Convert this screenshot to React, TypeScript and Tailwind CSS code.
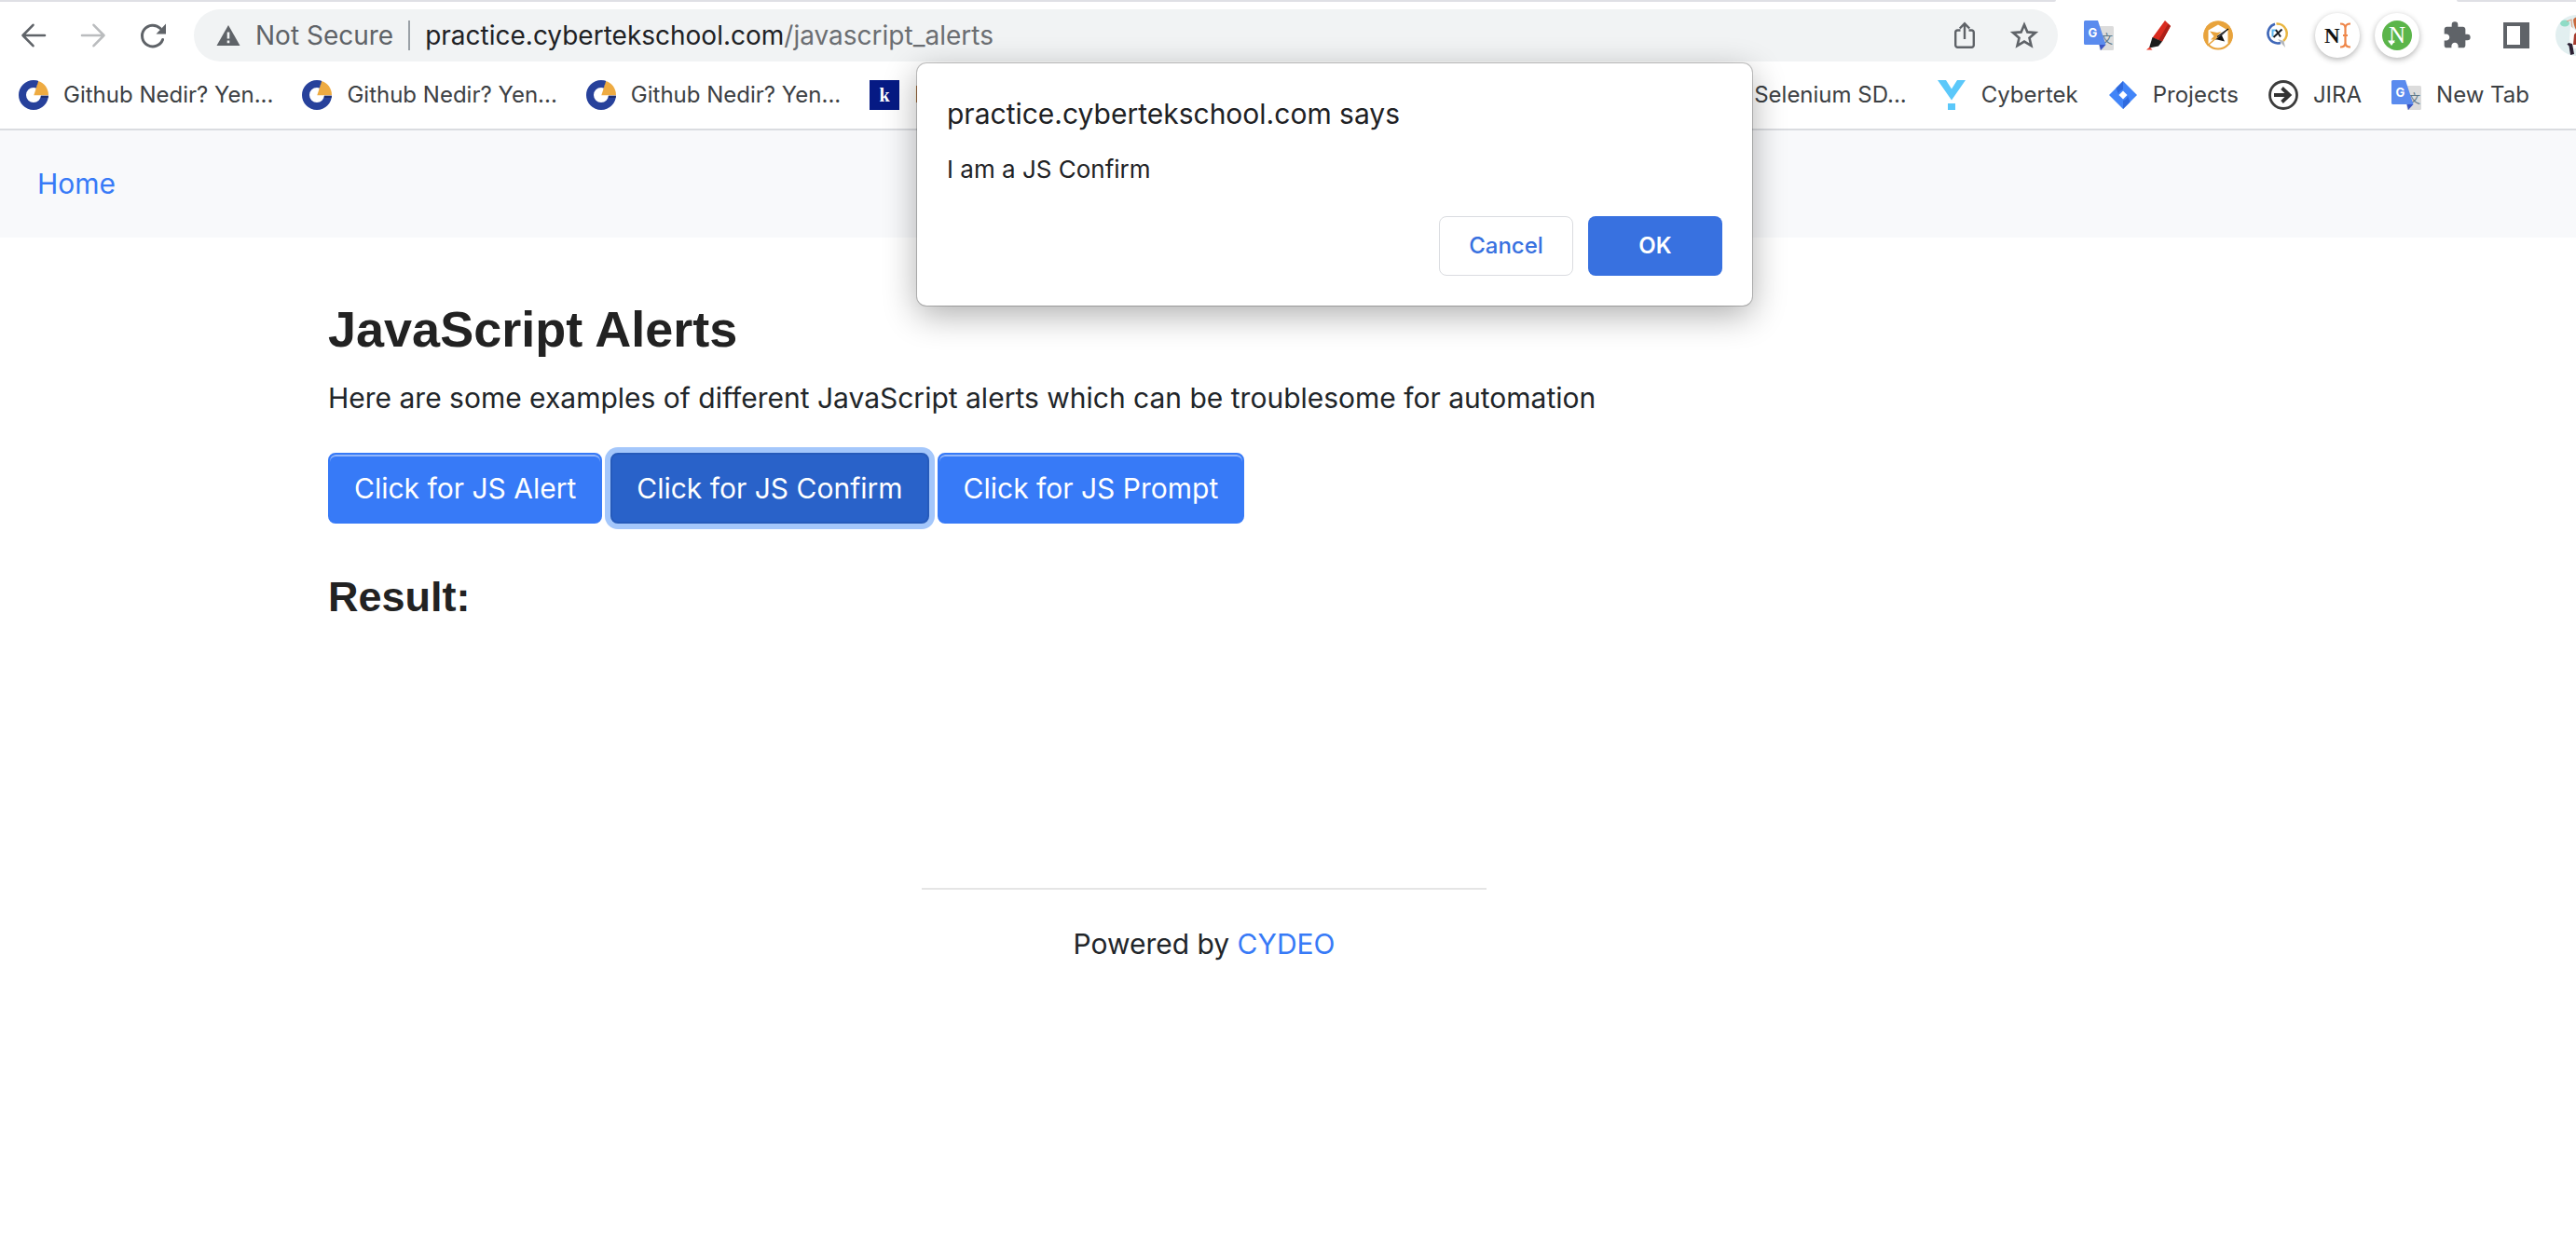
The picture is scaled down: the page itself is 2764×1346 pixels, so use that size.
import type { ReactNode } from "react";

const BookmarkRing = () => (
  <svg viewBox="0 0 32 32" className="size-8 shrink-0" aria-hidden="true">
    <circle cx="16" cy="16" r="12" fill="#fff" stroke="#27419b" strokeWidth="8" />
    <path d="M16.500 15.500 21.500 0 32 0V16.500H16.500Z" fill="#fff" />
    <path d="M21 0.800 18.500 9.500 21 8.500Z" fill="#1d2f73" />
    <path d="M16.300 16.300 21.300 1.100C27.500 3.200 32 8.800 32 16.300Z" fill="#eeab42" />
    <path d="M24 17H32L31.500 19H23.800Z" fill="#1d2f73" />
  </svg>
);

const KIcon = () => (
  <svg viewBox="0 0 32 32" className="size-8 shrink-0" aria-hidden="true">
    <rect width="32" height="32" fill="#061a84" />
    <text x="16" y="23" textAnchor="middle" fontFamily="Liberation Serif, serif" fontSize="20" fontWeight="700" fill="#fff">k</text>
  </svg>
);

const TranslateIcon = () => (
  <svg viewBox="0 0 32 32" className="size-8 shrink-0" aria-hidden="true">
    <path d="M12 6H30.500a1.500 1.500 0 0 1 1.500 1.500V30.500a1.500 1.500 0 0 1-1.500 1.500H17Z" fill="#dcdcdc" />
    <text x="24.500" y="24" textAnchor="middle" fontFamily="Noto Sans CJK SC, sans-serif" fontSize="13" fill="#607988">文</text>
    <path d="M16.500 26H23.500L18 32Z" fill="#3a55c4" />
    <path d="M1.500 0H15L23.500 26H1.500A1.500 1.500 0 0 1 0 24.500V1.500A1.500 1.500 0 0 1 1.500 0Z" fill="#5a8bee" />
    <text x="9.300" y="18" textAnchor="middle" fontFamily="Inter, sans-serif" fontSize="13" fontWeight="700" fill="#fff">G</text>
  </svg>
);

const CybertekIcon = () => (
  <svg viewBox="0 0 32 32" className="size-8 shrink-0" aria-hidden="true">
    <path d="M1 0H10L16 9.500 22 0H31L16 21.500Z" fill="#5bc8fa" />
    <rect x="12" y="25" width="8" height="7" fill="#5bc8fa" />
  </svg>
);

const JiraIcon = () => (
  <svg viewBox="0 0 32 32" className="size-8 shrink-0" aria-hidden="true">
    <path d="M16 1 31 16 16 31 1 16Z" fill="#4285f8" />
    <path d="M16 1V10Q11.500 11.500 11 15L8.500 8.500Z" fill="#2f6ade" />
    <path d="M16 31V22Q20.500 20.500 21 17L23.500 23.500Z" fill="#2f6ade" />
    <path d="M16 11.500 20.500 16 16 20.500 11.500 16Z" fill="#fff" />
  </svg>
);

const ArrowCircleIcon = () => (
  <svg viewBox="0 0 32 32" className="size-8 shrink-0" aria-hidden="true" fill="none">
    <circle cx="16" cy="16" r="14.500" stroke="#3c3c3c" strokeWidth="2.800" />
    <path d="M6 16H23M14.500 8.500 22.500 16 14.500 23.500" stroke="#333" strokeWidth="3.800" />
  </svg>
);

const BackIcon = () => (
  <svg viewBox="0 0 32 32" className="size-8" aria-hidden="true" fill="none" stroke="currentColor" strokeWidth="2.600" strokeLinecap="round" strokeLinejoin="round">
    <path d="M28 16H4.500M15.500 4.800 4.500 16 15.500 27.200" />
  </svg>
);

const ForwardIcon = () => (
  <svg viewBox="0 0 32 32" className="size-8" aria-hidden="true" fill="none" stroke="currentColor" strokeWidth="2.600" strokeLinecap="round" strokeLinejoin="round">
    <path d="M4 16H27.500M16.500 4.800 27.500 16 16.500 27.200" />
  </svg>
);

const ReloadIcon = () => (
  <svg viewBox="0 0 32 32" className="size-8" aria-hidden="true">
    <path d="M26.600 20.500A11.400 11.400 0 1 1 24 8.500" fill="none" stroke="#5f6368" strokeWidth="3" strokeLinecap="round" />
    <path d="M30 3.500V14.500H19.500Z" fill="#5f6368" />
  </svg>
);

const WarningIcon = () => (
  <svg viewBox="0 0 26 24" className="h-6 w-[26px]" aria-hidden="true">
    <path d="M13 1 25.500 23H0.500Z" fill="#5f6368" />
    <path d="M11.700 8.500H14.300V15.500H11.700ZM11.700 17.500H14.300V20.200H11.700Z" fill="#f1f3f4" />
  </svg>
);

const ShareIcon = () => (
  <svg viewBox="0 0 32 32" className="size-8" aria-hidden="true" fill="none" stroke="#5f6368" strokeWidth="2.400">
    <path d="M11.500 10.500H8.500a2.300 2.300 0 0 0-2.300 2.300V26.500a2.300 2.300 0 0 0 2.300 2.300H23.500a2.300 2.300 0 0 0 2.300-2.300V12.800a2.300 2.300 0 0 0-2.300-2.300H20.500" />
    <path d="M16 20V3.500M10.800 8.500 16 3.300 21.200 8.500" />
  </svg>
);

const StarIcon = () => (
  <svg viewBox="0 0 32 32" className="size-8" aria-hidden="true" fill="none" stroke="#5f6368" strokeWidth="2.600">
    <path d="M16 4.500 19.400 12.400 28 13.100 21.500 18.700 23.500 27.100 16 22.600 8.500 27.100 10.500 18.700 4 13.100 12.600 12.400Z" />
  </svg>
);

const MarkerIcon = () => (
  <svg viewBox="0 0 32 32" className="size-8" aria-hidden="true">
    <path d="M23 0 29 6 20 22.500 9.500 18.500Z" fill="#d92b1f" />
    <path d="M29 6 20 22.500 16 21 26.500 3.500Z" fill="#ad2018" />
    <path d="M9.500 18 20 22.500 16 27.500 6 29.500Z" fill="#1c1c1c" />
    <path d="M6.500 28.500 9.500 31.500H3Z" fill="#e8392b" />
  </svg>
);

const HexagonIcon = () => (
  <svg viewBox="0 0 32 32" className="size-8" aria-hidden="true">
    <circle cx="16" cy="16" r="14.600" fill="#fff" stroke="#e8a33c" strokeWidth="2" />
    <path d="M16 0.500A15.500 15.500 0 0 0 4 26L5.500 24V10.500L16 4.500 26.500 10.500V24L28 26A15.500 15.500 0 0 0 16 0.500Z" fill="#e8a33c" />
    <path d="M7 11.500 15 13 19.500 12 14.500 17 12 20.500 8 20.500 11.500 17Z" fill="#e8a33c" />
    <path d="M20 16 23 22.500 15 20.500 12.500 20.500 26 10.500Z" fill="#111" />
    <path d="M4.500 27 16 17" stroke="#e8a33c" strokeWidth="1.600" />
    <path d="M15 17.500 27 9" stroke="#111" strokeWidth="1.500" />
  </svg>
);

const MagnifierIcon = () => (
  <svg viewBox="0 0 32 32" className="size-8" aria-hidden="true" fill="none">
    <path d="M13 3.800A10.500 10.500 0 1 0 19 24" stroke="#4068b8" strokeWidth="2.600" />
    <path d="M14.500 3.500A10.500 10.500 0 0 1 22 22" stroke="#e9b53f" strokeWidth="2.600" />
    <path d="M10.500 9.500V17.500M10.500 10.500H14.500" stroke="#5ab4ee" strokeWidth="2" />
    <path d="M11.500 18 20.500 9.500M14 10 19 17.500" stroke="#191c22" strokeWidth="2" />
    <path d="M16 20 24 29 22.500 22Z" fill="#b3b7bc" />
  </svg>
);

const NCursorIcon = () => (
  <svg viewBox="0 0 32 32" className="size-8" aria-hidden="true">
    <text x="10.300" y="24" textAnchor="middle" fontFamily="Liberation Serif, serif" fontSize="23" fontWeight="700" fill="#111">N</text>
    <path d="M19 3.500Q24.500 3.500 24.500 8V24Q24.500 28.500 19 28.500M30 3.500Q24.500 3.500 24.500 8M24.500 24Q24.500 28.500 30 28.500M22 16H27" fill="none" stroke="#ee8649" strokeWidth="2.200" />
  </svg>
);

const NGreenIcon = () => (
  <svg viewBox="0 0 32 32" className="size-8" aria-hidden="true">
    <circle cx="16" cy="16" r="16" fill="#5bb54a" />
    <text x="16" y="24" textAnchor="middle" fontFamily="Liberation Serif, serif" fontSize="25" fill="#fff">N</text>
    <path d="M6 21.500H14L10 27Z" fill="#fff" />
  </svg>
);

const PuzzleIcon = () => (
  <svg viewBox="0 0 24 24" className="size-8" aria-hidden="true">
    <path d="M20.500 11H19V7c0-1.100-.9-2-2-2h-4V3.500a2.500 2.500 0 0 0-5 0V5H4c-1.100 0-1.990.9-1.990 2v3.800H3.500c1.490 0 2.700 1.210 2.700 2.700s-1.210 2.700-2.700 2.700H2V20c0 1.100.9 2 2 2h3.800v-1.500c0-1.490 1.210-2.700 2.700-2.700 1.490 0 2.700 1.210 2.700 2.700V22H17c1.100 0 2-.9 2-2v-4h1.500a2.500 2.500 0 0 0 0-5z" fill="#5f6368" />
  </svg>
);

const SidePanelIcon = () => (
  <svg viewBox="0 0 28 28" className="size-7" aria-hidden="true">
    <path d="M0 0H28V28H0ZM4 4V24H18V4Z" fill="#5f6368" fillRule="evenodd" />
  </svg>
);

const AvatarIcon = () => (
  <svg viewBox="0 0 44 44" className="size-11 shrink-0" aria-hidden="true">
    <clipPath id="avatar-disc">
      <circle cx="22" cy="22" r="22" />
    </clipPath>
    <g clipPath="url(#avatar-disc)">
      <rect width="44" height="44" fill="#e2eff0" />
      <ellipse cx="10" cy="9" rx="5" ry="3.500" fill="#8fdcc6" />
      <path d="M12 7 17 5 18 15" fill="none" stroke="#d9a58c" strokeWidth="1.200" />
      <path d="M16 12 22 17H44V36H17L15 26Z" fill="#fbfbfb" />
      <path d="M19 5Q22 1 28 2V18Q20 19 19 5Z" fill="#c9683b" />
      <path d="M20 21 22 19V32H19Z" fill="#a63a2c" />
      <path d="M14 30 18 31 20 42 16 43Z" fill="#2b2033" />
      <path d="M13 31 16 33" stroke="#2b2033" strokeWidth="2" />
    </g>
  </svg>
);

function ToolButton({ label, children, className = "" }: { label: string; children: ReactNode; className?: string }) {
  return (
    <button type="button" aria-label={label} className={`flex h-14 w-16 shrink-0 items-center justify-center ${className}`}>
      {children}
    </button>
  );
}

function RoundBadge({ children }: { children: ReactNode }) {
  return (
    <span className="flex size-12 items-center justify-center rounded-full bg-white shadow-[0_2px_6px_rgba(0,0,0,0.3)]">{children}</span>
  );
}

function Bookmark({ icon, label }: { icon: ReactNode; label: string }) {
  return (
    <a href="#" className="flex shrink-0 items-center gap-4 text-2xl whitespace-nowrap text-[#3c4043]">
      {icon}
      {label}
    </a>
  );
}

const primary =
  "h-[76px] rounded-lg border-2 border-[#377af7] bg-[#377af7] px-[26px] text-[30px] text-white shadow-[inset_0_2px_0_rgba(255,255,255,0.45)]";

export default function App() {
  return (
    <div className="relative min-h-screen overflow-hidden bg-white font-['Inter',sans-serif] text-[#212529]">
      <header className="border-b-2 border-[#dadce0]">
        <div className="flex h-0.5">
          <div className="flex-1 rounded-br-sm bg-[#dfe0e5]" />
          <div className="w-[430px]" />
          <div className="w-32 rounded-bl-sm bg-[#dfe0e5]" />
        </div>

        <div className="flex items-center pt-2 pl-1">
          <nav aria-label="History" className="flex">
            <ToolButton label="Back" className="text-[#5f6368]"><BackIcon /></ToolButton>
            <ToolButton label="Forward" className="text-[#babcbe]"><ForwardIcon /></ToolButton>
            <ToolButton label="Reload"><ReloadIcon /></ToolButton>
          </nav>
          <div className="ml-3 flex h-14 flex-1 items-center rounded-full bg-[#f1f3f4] pr-1 pl-6 text-[28px]">
            <button type="button" className="flex items-center gap-4 whitespace-nowrap text-[#5f6368]">
              <WarningIcon />
              Not Secure
            </button>
            <span className="ml-4 h-8 w-0.5 bg-[#9aa0a6]" />
            <div role="textbox" aria-label="Address" className="ml-4 flex-1 whitespace-nowrap text-[#202124]">
              practice.cybertekschool.com<span className="text-[#6b6e72]">/javascript_alerts</span>
            </div>
            <ToolButton label="Share"><ShareIcon /></ToolButton>
            <ToolButton label="Bookmark this page"><StarIcon /></ToolButton>
          </div>
          <div className="ml-3 flex items-center">
            <ToolButton label="Translate"><TranslateIcon /></ToolButton>
            <ToolButton label="Highlighter"><MarkerIcon /></ToolButton>
            <ToolButton label="Selector extension"><HexagonIcon /></ToolButton>
            <ToolButton label="XPath finder"><MagnifierIcon /></ToolButton>
            <ToolButton label="Name cursor"><RoundBadge><NCursorIcon /></RoundBadge></ToolButton>
            <ToolButton label="Page notes"><RoundBadge><NGreenIcon /></RoundBadge></ToolButton>
            <ToolButton label="Extensions"><PuzzleIcon /></ToolButton>
            <ToolButton label="Side panel"><SidePanelIcon /></ToolButton>
            <button type="button" aria-label="Profile" className="flex w-8 overflow-hidden pl-[10px]">
              <AvatarIcon />
            </button>
          </div>
        </div>

        <nav aria-label="Bookmarks" className="flex h-18 items-center justify-between pr-[50px] pl-5">
          <div className="flex items-center gap-[31px]">
            <Bookmark icon={<BookmarkRing />} label="Github Nedir? Yen..." />
            <Bookmark icon={<BookmarkRing />} label="Github Nedir? Yen..." />
            <Bookmark icon={<BookmarkRing />} label="Github Nedir? Yen..." />
            <Bookmark icon={<KIcon />} label="K" />
          </div>
          <div className="flex items-center gap-8">
            <Bookmark icon={null} label="Selenium SD..." />
            <Bookmark icon={<CybertekIcon />} label="Cybertek" />
            <Bookmark icon={<JiraIcon />} label="Projects" />
            <Bookmark icon={<ArrowCircleIcon />} label="JIRA" />
            <Bookmark icon={<TranslateIcon />} label="New Tab" />
          </div>
        </nav>
      </header>

      <nav aria-label="Site" className="flex h-[115px] items-center bg-[#f8f9fb] px-10">
        <a href="#" className="text-[30px] text-[#377af7]">Home</a>
      </nav>

      <div className="pr-[180px]">
        <main className="mx-auto max-w-[1880px] pt-[66px]">
          <h3 className="font-['Liberation_Sans',sans-serif] text-[54px] leading-[64px] font-bold text-[#222]">JavaScript Alerts</h3>
          <p className="mt-[18px] text-[30px] leading-[48px]">
            Here are some examples of different JavaScript alerts which can be troublesome for automation
          </p>
          <div className="mt-[35px] flex gap-[9px]">
            <button type="button" className={primary}>Click for JS Alert</button>
            <button
              type="button"
              className="h-[76px] rounded-lg border-2 border-[#265bbb] bg-[#2962c9] px-[26px] text-[30px] text-white shadow-[0_0_0_6px_#a4c7fb]"
            >
              Click for JS Confirm
            </button>
            <button type="button" className={primary}>Click for JS Prompt</button>
          </div>
          <h4 className="mt-[52px] font-['Liberation_Sans',sans-serif] text-[45px] leading-[54px] font-bold text-[#222]">Result:</h4>
        </main>
        <footer className="mt-[285px] text-center text-[30px] leading-[48px]">
          <hr className="mx-auto w-[606px] border-t-2 border-[#e5e5e5]" />
          <p className="mt-[34px]">
            Powered by <a href="#" className="text-[#377af7]">CYDEO</a>
          </p>
        </footer>
      </div>

      <div
        role="dialog"
        aria-labelledby="dialog-title"
        className="absolute top-[68px] left-[984px] w-[896px] rounded-[10px] bg-white px-8 pt-[34px] pb-8 text-[#202124] shadow-[0_0_0_1px_rgba(0,0,0,0.22),0_10px_36px_rgba(0,0,0,0.32)]"
      >
        <h2 id="dialog-title" className="text-[30px] leading-10">practice.cybertekschool.com says</h2>
        <p className="mt-5 text-[26px] leading-10">I am a JS Confirm</p>
        <div className="mt-[30px] flex justify-end gap-4">
          <button type="button" className="h-16 w-36 rounded-lg border border-[#dadce0] text-2xl font-medium text-[#3871e0]">Cancel</button>
          <button type="button" className="h-16 w-36 rounded-lg bg-[#3871e0] text-2xl font-semibold text-white">OK</button>
        </div>
      </div>
    </div>
  );
}
